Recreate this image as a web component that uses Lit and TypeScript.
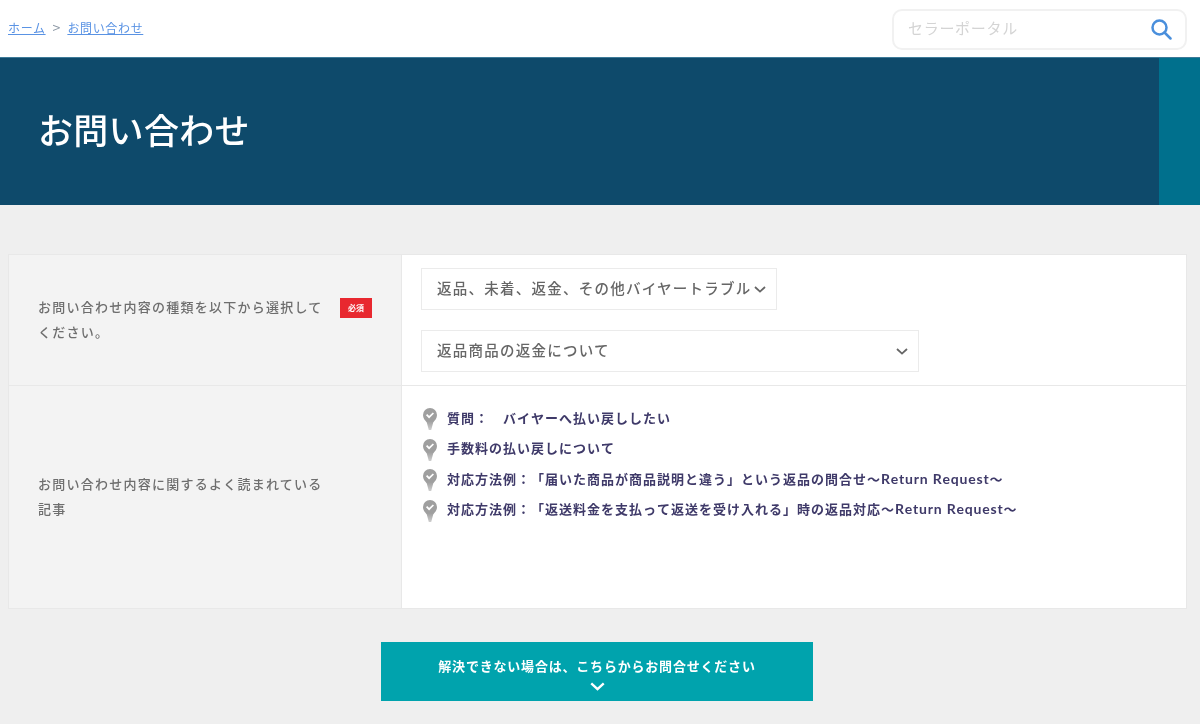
import { LitElement, html, css, svg } from "lit";
import { customElement } from "lit/decorators.js";

const chevron = (w: number, h: number, stroke: string, sw: number) => html`<svg width=${w} height=${h} viewBox="0 0 12 7" fill="none" stroke=${stroke} stroke-width=${sw}><path d="M1 1l5 4.6L11 1"/></svg>`;

const pin = svg`<svg width="16" height="24" viewBox="0 0 16 24"><defs><linearGradient id="pinfade" x1="0" y1="0" x2="0" y2="1"><stop offset="0.6" stop-color="#9f9f9f"/><stop offset="1" stop-color="#cfcfcf"/></linearGradient></defs><path d="M8 1a7 7 0 0 0-7 7c0 3.200 2 5.400 3.800 7.400L6.800 23h2.400l2-7.600C13 13.400 15 11.200 15 8a7 7 0 0 0-7-7z" fill="url(#pinfade)"/><path d="M4.600 7.600l2.500 2.600 4.300-4.200" fill="none" stroke="#fff" stroke-width="1.700"/></svg>`;

const articles: [string, string?, string?][] = [
  ["質問：　バイヤーへ払い戻ししたい"],
  ["手数料の払い戻しについて"],
  ["対応方法例：「届いた商品が商品説明と違う」という返品の問合せ～", "Return Request", "～"],
  ["対応方法例：「返送料金を支払って返送を受け入れる」時の返品対応～", "Return Request", "～"],
];

@customElement("app-root")
export class AppRoot extends LitElement {
  static styles = css`
    :host {
      display: block;
      width: 1200px;
      height: 724px;
      overflow: hidden;
      background: #efefef;
      font-family: "Noto Sans CJK JP", "Noto Sans", sans-serif;
      filter: blur(0.4px);
    }
    .top {
      height: 57px;
      background: #fff;
      display: flex;
      align-items: center;
      justify-content: space-between;
      padding: 0 13px 0 8px;
      box-sizing: border-box;
    }
    .crumbs {
      display: flex;
      align-items: center;
      gap: 7px;
      font-size: 12px;
      letter-spacing: 0.65px;
      color: #5a93e4;
      margin-top: -3px;
    }
    .crumbs a { color: #5a93e4; text-decoration: underline; }
    .crumbs span { color: #8a96a3; font-size: 14px; line-height: 16px; letter-spacing: 0; }
    .search {
      width: 295px;
      height: 41px;
      box-sizing: border-box;
      border: 2px solid #f1f1f1;
      border-radius: 10px;
      display: flex;
      align-items: center;
      justify-content: space-between;
      padding: 0 13px 4px 14px;
      font-size: 15px;
      letter-spacing: 0.7px;
      color: #d4d4d4;
      margin-top: 1px;
    }
    .search svg { display: block; margin-top: 4px; }
    .banner {
      height: 148px;
      background: #0e4a6b;
      display: flex;
      justify-content: space-between;
      border-top: 1px solid #3d7a98;
      box-sizing: border-box;
    }
    .banner h1 {
      margin: 0;
      padding: 46px 0 0 38px;
      font-size: 35px;
      line-height: 50px;
      letter-spacing: 0.3px;
      font-weight: 500;
      color: #fff;
    }
    .accent { width: 41px; background: #00708d; }
    .table {
      margin: 49px 13px 0 8px;
      border: 1px solid #e8e8e8;
      background: #fff;
    }
    .row { display: grid; grid-template-columns: 393px 1fr; }
    .row + .row { border-top: 1px solid #e8e8e8; }
    .r1 { height: 130px; }
    .r2 { height: 222px; }
    .label {
      background: #f3f3f3;
      border-right: 1px solid #e8e8e8;
      padding: 0 29px;
      display: flex;
      align-items: center;
      justify-content: space-between;
      font-size: 13px;
      font-weight: 500;
      line-height: 25.500px;
      letter-spacing: 1.250px;
      color: #6e6e6e;
    }
    .label .text { width: 292px; margin-top: -2px; }
    .req {
      width: 32px;
      height: 20px;
      background: #e8282f;
      color: #fff;
      font-size: 8px;
      font-weight: 700;
      letter-spacing: 0;
      line-height: 20px;
      text-align: center;
      margin: -24px 0 0 0;
      flex: none;
    }
    .selects {
      padding: 13px 19px;
      display: flex;
      flex-direction: column;
      align-items: flex-start;
      gap: 20px;
    }
    .select {
      height: 42px;
      box-sizing: border-box;
      border: 1px solid #ebebeb;
      background: #fff;
      display: flex;
      align-items: center;
      justify-content: space-between;
      font-size: 14.500px;
      font-weight: 500;
      letter-spacing: 1.250px;
      color: #666;
      white-space: nowrap;
    }
    .select span { margin-top: -4px; }
    .s1 { width: 356px; padding: 0 10px 0 15px; }
    .s2 { width: 498px; padding: 0 10px 0 15px; }
    .list {
      list-style: none;
      margin: 0;
      padding: 17px 0 0 20px;
      display: flex;
      flex-direction: column;
    }
    .list li {
      height: 30.500px;
      display: flex;
      align-items: center;
      gap: 9px;
      font-size: 13px;
      font-weight: 700;
      letter-spacing: 1px;
      text-spacing-trim: space-all;
      font-kerning: none;
      color: #3f3a69;
      white-space: nowrap;
    }
    .list li span { margin-top: -2px; }
    .list .latin { font-family: "Lato", sans-serif; font-size: 14px; letter-spacing: 0.800px; margin: 0; }
    .list svg { flex: none; display: block; margin-top: 2px; }
    .cta-wrap { display: flex; justify-content: center; padding-top: 33px; margin-left: -6px; }
    .cta {
      width: 432px;
      height: 59px;
      box-sizing: border-box;
      background: #00a3ad;
      color: #fff;
      display: flex;
      flex-direction: column;
      align-items: center;
      padding-top: 13px;
      font-size: 13px;
      line-height: 22px;
      font-weight: 700;
      letter-spacing: 0.800px;
    }
    .cta svg { display: block; margin-top: 5px; }
  `;

  render() {
    return html`
      <div class="top">
        <div class="crumbs"><a>ホーム</a><span>&gt;</span><a>お問い合わせ</a></div>
        <div class="search">
          セラーポータル
          <svg width="22" height="22" viewBox="0 0 22 22" fill="none" stroke="#4a8fdc" stroke-width="2.500"><circle cx="9.500" cy="9.500" r="7"/><path d="M14.500 14.500L20.500 20.500" stroke-linecap="round"/></svg>
        </div>
      </div>
      <div class="banner">
        <h1>お問い合わせ</h1>
        <div class="accent"></div>
      </div>
      <div class="table">
        <div class="row r1">
          <div class="label">
            <div class="text">お問い合わせ内容の種類を以下から選択してください。</div>
            <div class="req">必須</div>
          </div>
          <div class="selects">
            <div class="select s1"><span>返品、未着、返金、その他バイヤートラブル</span>${chevron(12, 7, "#666", 1.8)}</div>
            <div class="select s2"><span>返品商品の返金について</span>${chevron(12, 7, "#666", 1.8)}</div>
          </div>
        </div>
        <div class="row r2">
          <div class="label">
            <div class="text">お問い合わせ内容に関するよく読まれている記事</div>
          </div>
          <ul class="list">
            ${articles.map(([a, b, c]) => html`<li>${pin}<span>${a}${b ? html`<span class="latin">${b}</span>${c}` : ""}</span></li>`)}
          </ul>
        </div>
      </div>
      <div class="cta-wrap">
        <div class="cta">解決できない場合は、こちらからお問合せください${chevron(15, 9, "#fff", 1.9)}</div>
      </div>
    `;
  }
}
